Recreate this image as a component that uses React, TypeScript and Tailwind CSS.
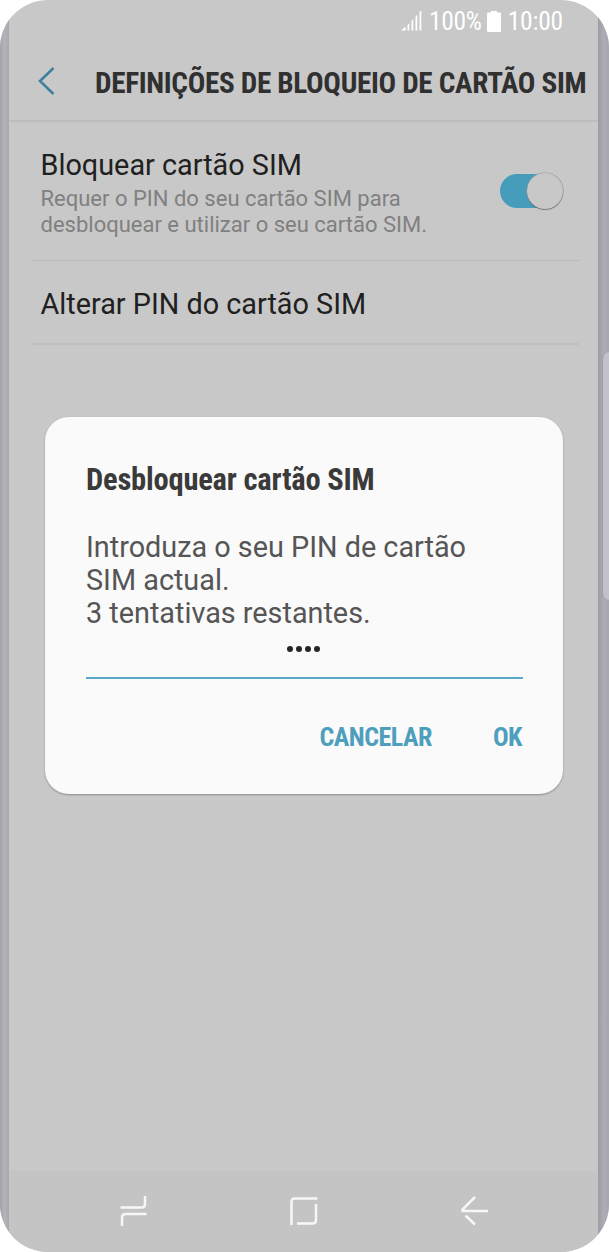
import React from "react";

function StatusBar() {
  return (
    <div className="flex h-[42px] shrink-0 items-center justify-end pr-[35px] text-white">
      <svg className="mr-[7px] h-[22px] w-[21px]" viewBox="0 0 21 22" fill="currentColor">
        <path d="M0 20.500 4.500 16.500v4zM6.500 15l1.800-1.800v7.300H6.500zM10.500 11l1.800-1.800v11.300h-1.800zM14.500 6.500l1.800-1.800v15.800h-1.800zM18.500 2l1.800-1.800v20.300h-1.800z" />
      </svg>
      <span className="font-['Roboto_Condensed',Roboto,sans-serif] text-[25.5px] leading-[42px] tracking-[-0.3px] whitespace-nowrap [font-stretch:75%]">100%</span>
      <svg className="mr-[7px] ml-[5px] h-[21px] w-[14px]" viewBox="0 0 14 21" fill="currentColor">
        <path d="M4 0h6v1.500h3q1 0 1 1V20q0 1-1 1H1q-1 0-1-1V2.500q0-1 1-1h3z" />
      </svg>
      <span className="font-['Roboto_Condensed',Roboto,sans-serif] text-[25.5px] leading-[42px] tracking-[-0.2px] whitespace-nowrap [font-stretch:75%]">10:00</span>
    </div>
  );
}

function Header() {
  return (
    <header className="flex h-20 shrink-0 items-center border-b-2 border-[#bdbdbd] pl-[29px]">
      <svg className="h-7 w-[18px] shrink-0" viewBox="0 0 18 28" fill="none" stroke="#3c839c" strokeWidth="2.6">
        <path d="M15.500 1 2 14l13.500 13" />
      </svg>
      <h1 className="ml-[39px] pt-[5px] whitespace-nowrap font-['Roboto_Condensed',Roboto,sans-serif] text-[29.2px] font-bold tracking-[-0.33px] text-[#303030] [font-stretch:75%]">
        DEFINIÇÕES DE BLOQUEIO DE CARTÃO SIM
      </h1>
    </header>
  );
}

function Toggle() {
  return (
    <div className="flex h-[34px] w-[63px] items-center justify-end rounded-full bg-[#469dbb]">
      <div className="h-9 w-9 shrink-0 rounded-full bg-[#c8c8c8] shadow-[0_1px_1px_rgba(0,0,0,0.3),0_0_0_0.6px_#999]" />
    </div>
  );
}

function Dialog() {
  return (
    <section className="absolute top-[417px] left-[45px] flex h-[377px] w-[518px] flex-col rounded-[24px] bg-[#fafafa] px-[41px] pt-[43px] shadow-[0_1px_2px_rgba(0,0,0,0.3)]">
      <h2 className="whitespace-nowrap font-['Roboto_Condensed',Roboto,sans-serif] text-[30.5px] leading-10 font-bold tracking-[-0.2px] text-[#3a3a3a] [font-stretch:75%]">
        Desbloquear cartão SIM
      </h2>
      <p className="mt-[31px] whitespace-nowrap text-[28.8px] leading-[33px] text-[#555]">
        Introduza o seu PIN de cartão
        <br />
        SIM actual.
        <br />
        3 tentativas restantes.
      </p>
      <div className="flex h-[49px] w-[437px] justify-center gap-[3px] border-b-2 border-[#5aaac7] pt-[16px] pr-[2px]">
        <i className="h-1.5 w-1.5 rounded-full bg-[#252525]" />
        <i className="h-1.5 w-1.5 rounded-full bg-[#252525]" />
        <i className="h-1.5 w-1.5 rounded-full bg-[#252525]" />
        <i className="h-1.5 w-1.5 rounded-full bg-[#252525]" />
      </div>
      <div className="mt-[38px] flex justify-end gap-[61px] font-['Roboto_Condensed',Roboto,sans-serif] text-[26px] leading-10 font-bold tracking-[-0.5px] text-[#4d9fbd] [font-stretch:75%]">
        <button>CANCELAR</button>
        <button>OK</button>
      </div>
    </section>
  );
}

export default function App() {
  return (
    <div className="h-[1252px] w-[609px] bg-white">
      <main className="relative flex h-full w-full overflow-hidden rounded-[48px] bg-[#c8c8c8] font-[Roboto,sans-serif]">
        <div className="w-[9px] shrink-0 bg-linear-to-r from-[#a2a3a9] via-[#b3b4ba] to-[#a8a9ad]" />
        <div className="flex w-[589px] shrink-0 flex-col">
          <StatusBar />
          <Header />
          <div className="mr-[19px] ml-[22px] flex h-[139px] shrink-0 justify-between border-b border-[#b7b7b7] pr-[16px] pl-[9.5px]">
            <div className="whitespace-nowrap pt-[25px]">
              <h3 className="text-[28.8px] leading-[36px] text-[#202020]">Bloquear cartão SIM</h3>
              <p className="mt-[3px] text-[22px] leading-[26px] text-[#808080]">
                Requer o PIN do seu cartão SIM para
                <br />
                desbloquear e utilizar o seu cartão SIM.
              </p>
            </div>
            <div className="pt-[52px]">
              <Toggle />
            </div>
          </div>
          <div className="mr-[19px] ml-[22px] flex h-[84px] shrink-0 items-center border-b-2 border-[#bfbfbf] pt-[5px] pl-[9.5px]">
            <h3 className="whitespace-nowrap text-[28.8px] text-[#202020]">Alterar PIN do cartão SIM</h3>
          </div>
          <div className="grow" />
          <nav className="flex h-[81px] shrink-0 bg-[#c4c4c4] pt-[25px] pl-[110px] text-[#f7f7f7]">
            <svg className="h-8 w-8" viewBox="0 0 32 32" fill="none" stroke="currentColor" strokeWidth="2.5">
              <path d="M1.500 11.500h21q3.500 0 3.500-3.500V0M27.500 18h-21Q3 18 3 21.500V30" />
            </svg>
            <svg className="ml-[137px] h-8 w-8" viewBox="0 0 32 32" fill="none" stroke="currentColor" strokeWidth="2.5">
              <path d="M3.500 29V5.500Q3.500 2.500 6.500 2.500H29.500M28 8v16q0 3.500-3.500 3.500H9" />
            </svg>
            <svg className="ml-[139px] h-8 w-8" viewBox="0 0 32 32" fill="none" stroke="currentColor" strokeWidth="2.5">
              <path d="M16 1 3.500 13.500Q2.500 15 4.500 15H29M6.500 19.500 16 28.500" />
            </svg>
          </nav>
        </div>
        <div className="grow bg-linear-to-r from-[#9c9da2] via-[#acadb5] to-[#a6a7ae]">
          <div className="mt-[352px] ml-1 h-[248px] rounded-l-[8px] border-l border-[#9a9aa2] bg-[#c2c2cb]" />
        </div>
        <Dialog />
      </main>
    </div>
  );
}
